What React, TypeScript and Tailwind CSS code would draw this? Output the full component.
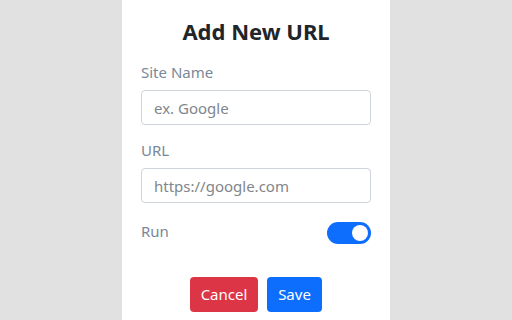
export default function App() {
  return (
    <div className="h-[320px] w-[512px] bg-[#e1e1e1] flex justify-center overflow-hidden" style={{ fontFamily: '"Noto Sans", "Open Sans", sans-serif' }}>
      <div className="w-[268px] h-full bg-white pt-[17px] px-[19px]">
        <h1 className="text-center text-[22px] leading-[28px] font-bold text-[#212529]">Add New URL</h1>

        <label className="block mt-[16px] text-[15px] leading-[22px] text-[#7a8898]">Site Name</label>
        <input
          placeholder="ex. Google"
          className="mt-[7px] block w-full h-[35px] px-[12px] text-[15px] border border-[#ced4da] rounded-[4px] placeholder:text-[#80868c] outline-none"
        />

        <label className="block mt-[14px] text-[15px] leading-[22px] text-[#7a8898]">URL</label>
        <input
          placeholder="https://google.com"
          className="mt-[7px] block w-full h-[35px] px-[12px] text-[15px] border border-[#ced4da] rounded-[4px] placeholder:text-[#80868c] outline-none"
        />

        <div className="mt-[17px] flex justify-between items-start">
          <span className="text-[15px] leading-[22px] text-[#7a8898]">Run</span>
          <div className="mt-[2px] w-[44px] h-[22px] rounded-full bg-[#0d6efd] flex items-center justify-end pr-[3px]">
            <div className="w-[16px] h-[16px] rounded-full bg-white" />
          </div>
        </div>

        <div className="mt-[33px] flex justify-center gap-[9px]">
          <button className="w-[68px] h-[35px] rounded-[4px] bg-[#dc3545] text-white text-[15px]">Cancel</button>
          <button className="w-[55px] h-[35px] rounded-[4px] bg-[#0d6efd] text-white text-[15px]">Save</button>
        </div>
      </div>
    </div>
  );
}
